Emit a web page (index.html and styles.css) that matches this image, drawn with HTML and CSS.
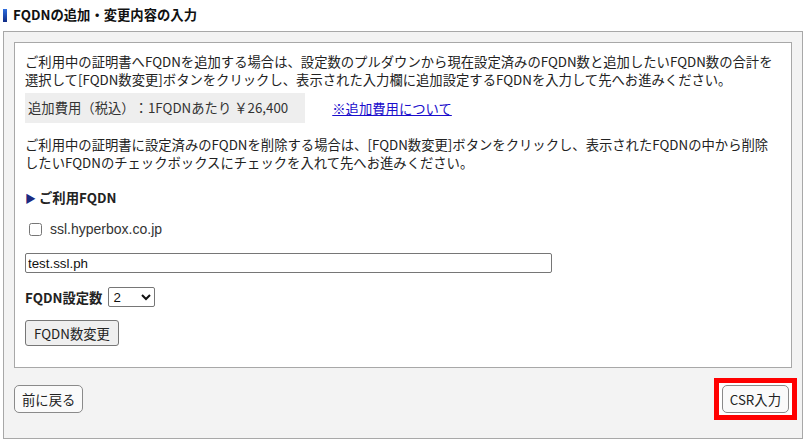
FILE: index.html
```html
<!DOCTYPE html>
<html lang="ja">
<head>
  <meta charset="UTF-8">
  <meta name="viewport" content="width=device-width, initial-scale=1.0">
  <title>FQDNの追加・変更内容の入力</title>
  <link rel="stylesheet" href="styles.css">
</head>
<body>
  <div class="page">
    <h2 class="page-title">FQDNの追加・変更内容の入力</h2>
    <div class="panel">
      <form class="panel-body">
        <p class="note">ご利用中の証明書へFQDNを追加する場合は、設定数のプルダウンから現在設定済みのFQDN数と追加したいFQDN数の合計を<br>選択して[FQDN数変更]ボタンをクリックし、表示された入力欄に追加設定するFQDNを入力して先へお進みください。</p>
        <div class="price-row">
          <span class="price">追加費用（税込）：1FQDNあたり ￥26,400</span>
          <a href="#" class="price-link">※追加費用について</a>
        </div>
        <p class="note note-delete">ご利用中の証明書に設定済みのFQDNを削除する場合は、[FQDN数変更]ボタンをクリックし、表示されたFQDNの中から削除<br>したいFQDNのチェックボックスにチェックを入れて先へお進みください。</p>
        <h3 class="section-title"><span class="arrow">▶</span> ご利用FQDN</h3>
        <label class="fqdn-item"><input type="checkbox"> ssl.hyperbox.co.jp</label>
        <input type="text" class="fqdn-input" value="test.ssl.ph">
        <div class="count-row">
          <span class="count-label">FQDN設定数</span>
          <select class="count-select">
            <option>1</option>
            <option selected>2</option>
            <option>3</option>
          </select>
        </div>
        <button type="button" class="btn btn-change">FQDN数変更</button>
      </form>
      <div class="panel-footer">
        <button type="button" class="btn btn-nav">前に戻る</button>
        <div class="highlight">
          <button type="button" class="btn btn-nav">CSR入力</button>
        </div>
      </div>
    </div>
  </div>
</body>
</html>
```

FILE: styles.css
```css
body {
  margin: 0;
  font-family: "Noto Sans CJK JP", "Liberation Sans", sans-serif;
  font-size: 13.33px;
  color: #222;
  background: #fff;
  text-spacing-trim: space-all;
}
.page {
  padding: 8px 3px 0 3px;
}
.page-title {
  display: flex;
  align-items: center;
  gap: 6px;
  margin: 0 0 9px;
  font-size: 13.33px;
  line-height: 14px;
  font-weight: bold;
  color: #111;
}
.page-title::before {
  content: "";
  width: 4px;
  height: 13px;
  background: linear-gradient(#2f6fe0, #102b85);
}
.panel {
  border: 1px solid #a8a8a8;
  background: #f3f3f3;
  padding: 10px 10px 18px;
}
.panel-body {
  margin: 0;
  border: 1px solid #a8a8a8;
  background: #fff;
  padding: 10px 10px 21px;
}
.note {
  margin: 0;
  line-height: 18px;
}
.price-row {
  display: flex;
  align-items: center;
  margin-top: 4px;
}
.price {
  background: #eee;
  padding: 6px 17px 6px 3px;
  line-height: 18px;
  color: #333;
}
.price-link {
  margin-left: 27px;
  color: #1a0dcc;
}
.note-delete {
  margin-top: 13px;
}
.section-title {
  margin: 17px 0 0;
  font-size: 13.33px;
  line-height: 18px;
  font-weight: bold;
}
.arrow {
  color: #1c2a80;
  font-size: 11px;
}
.fqdn-item {
  display: flex;
  align-items: center;
  margin-top: 13px;
  height: 18px;
  font-family: "Liberation Sans", Arial, sans-serif;
  font-size: 14px;
  color: #333;
}
.fqdn-item input {
  margin: 0 8px 0 4px;
  width: 13px;
  height: 13px;
}
.fqdn-input {
  display: block;
  box-sizing: border-box;
  width: 527px;
  height: 20px;
  margin-top: 15px;
  padding: 1px 2px;
  border: 1px solid #767676;
  border-radius: 2px;
  font-family: "Liberation Sans", Arial, sans-serif;
  font-size: 13.33px;
  color: #111;
}
.count-row {
  display: flex;
  align-items: center;
  gap: 6px;
  margin-top: 14px;
}
.count-label {
  font-weight: bold;
}
.count-select {
  box-sizing: border-box;
  width: 47px;
  height: 20px;
  font-family: "Liberation Sans", Arial, sans-serif;
  font-size: 13.33px;
  border: 1px solid #767676;
  border-radius: 2px;
  background: #fff;
  color: #111;
}
.btn {
  font-family: "Noto Sans CJK JP", "Liberation Sans", sans-serif;
  font-size: 13.33px;
  color: #222;
  cursor: pointer;
}
.btn-change {
  display: block;
  margin-top: 13px;
  height: 26px;
  padding: 0 8px;
  background: #efefef;
  border: 1px solid #767676;
  border-radius: 3px;
}
.panel-footer {
  display: flex;
  justify-content: space-between;
  align-items: center;
  padding-top: 10px;
}
.btn-nav {
  height: 28px;
  padding: 0 7px;
  background: #fafafa;
  border: 1px solid #8a8a8a;
  border-radius: 5px;
}
.highlight {
  margin-right: -5px;
  border: 5px solid #f00;
  padding: 2px 3px;
  background: #fff;
}
```
